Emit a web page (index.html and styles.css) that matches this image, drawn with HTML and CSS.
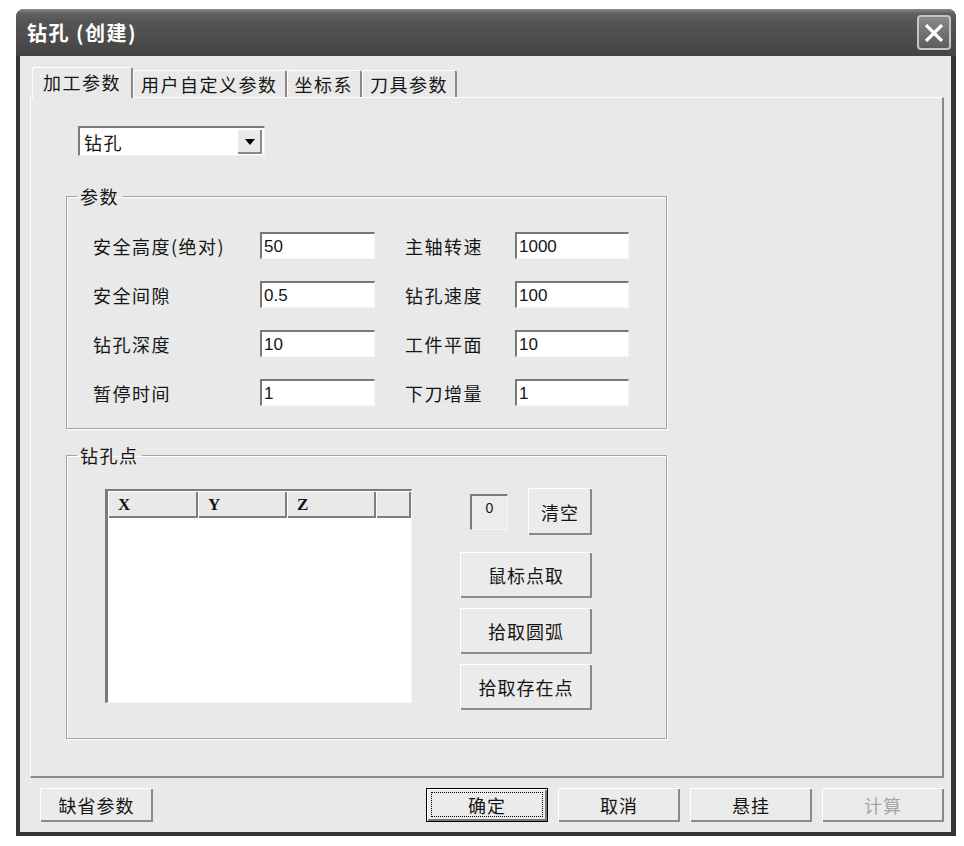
FILE: index.html
```html
<!DOCTYPE html>
<html lang="zh-CN">
<head>
<meta charset="utf-8">
<title>钻孔(创建)</title>
<link rel="stylesheet" href="styles.css">
</head>
<body>
<div class="window">
  <div class="titlebar">
    <span class="title">钻孔 (创建)</span>
    <span class="close">
      <svg width="20" height="18" viewBox="0 0 20 18"><path d="M2 1 L18 17 M18 1 L2 17" stroke="#fff" stroke-width="3.2" fill="none"/></svg>
    </span>
  </div>
  <div class="client">
    <div class="tabs">
      <div class="tab active">加工参数</div>
      <div class="tab">用户自定义参数</div>
      <div class="tab">坐标系</div>
      <div class="tab">刀具参数</div>
    </div>
    <div class="panel">
      <div class="combo">
        <span class="combo-text">钻孔</span>
        <span class="combo-btn"><svg width="10" height="6" viewBox="0 0 10 6"><path d="M0 0 H10 L5 6 Z" fill="#000"/></svg></span>
      </div>
      <fieldset class="group group-params">
        <legend>参数</legend>
        <div class="param-grid">
          <span class="lbl">安全高度(绝对)</span><input class="field" type="text" value="50" readonly>
          <span class="lbl lbl-right">主轴转速</span><input class="field" type="text" value="1000" readonly>
          <span class="lbl">安全间隙</span><input class="field" type="text" value="0.5" readonly>
          <span class="lbl lbl-right">钻孔速度</span><input class="field" type="text" value="100" readonly>
          <span class="lbl">钻孔深度</span><input class="field" type="text" value="10" readonly>
          <span class="lbl lbl-right">工件平面</span><input class="field" type="text" value="10" readonly>
          <span class="lbl">暂停时间</span><input class="field" type="text" value="1" readonly>
          <span class="lbl lbl-right">下刀增量</span><input class="field" type="text" value="1" readonly>
        </div>
      </fieldset>
      <fieldset class="group group-points">
        <legend>钻孔点</legend>
        <div class="points-body">
          <div class="listview">
            <div class="lv-header">
              <div class="lv-col col-x">X</div>
              <div class="lv-col col-y">Y</div>
              <div class="lv-col col-z">Z</div>
              <div class="lv-col col-rest"></div>
            </div>
            <div class="lv-body"></div>
          </div>
          <div class="point-actions">
            <div class="count-row">
              <div class="count">0</div>
              <button class="btn btn-clear">清空</button>
            </div>
            <button class="btn btn-wide">鼠标点取</button>
            <button class="btn btn-wide">拾取圆弧</button>
            <button class="btn btn-wide">拾取存在点</button>
          </div>
        </div>
      </fieldset>
    </div>
    <div class="footer">
      <button class="btn btn-foot btn-default-params">缺省参数</button>
      <div class="footer-right">
        <button class="btn btn-foot btn-ok"><span class="focus">确定</span></button>
        <button class="btn btn-foot">取消</button>
        <button class="btn btn-foot">悬挂</button>
        <button class="btn btn-foot btn-disabled">计算</button>
      </div>
    </div>
  </div>
</div>
</body>
</html>
```
FILE: styles.css
```css
* { box-sizing: border-box; }

body {
  margin: 0;
  background: #ffffff;
  font-family: "Noto Sans CJK SC", "Noto Sans", sans-serif;
  color: #151515;
}

.window {
  margin: 9px 0 0 16px;
  width: 940px;
  height: 827px;
  display: flex;
  flex-direction: column;
  background: #353535;
  border-radius: 8px 8px 0 0;
}

.titlebar {
  height: 47px;
  flex: none;
  display: flex;
  align-items: center;
  justify-content: space-between;
  padding: 0 5px 0 11px;
  border-radius: 8px 8px 0 0;
  background: linear-gradient(#8c8c8c 0, #626262 4px, #555555 12px, #4d4d4d 28px, #444444 100%);
}

.title {
  color: #ffffff;
  font-weight: 700;
  font-size: 20px;
  letter-spacing: 1.5px;
  line-height: 24px;
}

.close {
  width: 34px;
  height: 35px;
  border: 2px solid #c4c4c4;
  border-radius: 4px;
  background: linear-gradient(#8a8a8a, #5c5c5c);
  display: flex;
  align-items: center;
  justify-content: center;
}

.client {
  flex: 1;
  min-height: 0;
  margin: 0 5px 4px 4px;
  background: #e9e9e9;
  display: flex;
  flex-direction: column;
  padding: 11px 7px 10px 10px;
}

.tabs {
  display: flex;
  align-items: flex-end;
  height: 30px;
  flex: none;
  padding-left: 2px;
}

.tab {
  height: 27px;
  padding: 0 7px;
  font-size: 18px;
  letter-spacing: 1.5px;
  line-height: 26px;
  border-top: 1px solid #ffffff;
  border-left: 1px solid #ffffff;
  border-right: 2px solid #8a8a8a;
  border-radius: 3px 3px 0 0;
  background: #e9e9e9;
  white-space: nowrap;
}

.tab.active {
  height: 31px;
  padding: 0 10px;
  line-height: 29px;
  margin-bottom: -1px;
  position: relative;
  z-index: 1;
}

.panel {
  flex: 1;
  min-height: 0;
  border-top: 1px solid #ffffff;
  border-left: 1px solid #ffffff;
  border-right: 2px solid #8a8a8a;
  border-bottom: 2px solid #8a8a8a;
  padding: 28px 0 0 35px;
}

.combo {
  margin-left: 12px;
  width: 187px;
  height: 30px;
  display: flex;
  align-items: center;
  background: #ffffff;
  border-style: solid;
  border-width: 2px 1px 1px 2px;
  border-color: #7a7a7a #f4f4f4 #f4f4f4 #7a7a7a;
  padding: 1px 2px 1px 0;
}

.combo-text {
  flex: 1;
  padding-left: 4px;
  font-size: 18px;
  letter-spacing: 1.5px;
  line-height: 24px;
}

.combo-btn {
  width: 25px;
  height: 25px;
  display: flex;
  align-items: center;
  justify-content: center;
  background: #e9e9e9;
  box-shadow: inset 1px 1px 0 #ffffff, inset -2px -2px 0 #8a8a8a;
}

.group {
  margin: 29px 0 0 0;
  width: 601px;
  min-inline-size: 0;
  padding: 0;
  border: 1px solid #a2a2a2;
  box-shadow: 1px 1px 0 #ffffff, inset 1px 1px 0 #ffffff;
}

.group-points {
  margin-top: 15px;
}

.group legend {
  margin-left: 10px;
  padding: 0 3px;
  font-size: 18px;
  letter-spacing: 1.5px;
  line-height: 22px;
}

.param-grid {
  display: grid;
  grid-template-columns: 167px 115px 140px 114px;
  grid-auto-rows: 27px;
  row-gap: 22px;
  align-items: center;
  padding: 25px 0 22px 26px;
}

.lbl {
  font-size: 18px;
  letter-spacing: 1.5px;
  line-height: 24px;
  white-space: nowrap;
}

.lbl-right {
  padding-left: 30px;
}

.field {
  width: 100%;
  height: 27px;
  margin: 0;
  background: #ffffff;
  border-style: solid;
  border-width: 2px 1px 1px 2px;
  border-color: #787878 #f6f6f6 #f6f6f6 #787878;
  padding: 2px 0 0 2px;
  font-family: "Liberation Sans", Arial, sans-serif;
  font-size: 17px;
  color: #151515;
  outline: none;
}

.points-body {
  display: flex;
  align-items: flex-start;
  padding: 23px 0 28px 38px;
}

.listview {
  width: 307px;
  height: 214px;
  display: flex;
  flex-direction: column;
  background: #ffffff;
  border-style: solid;
  border-width: 2px 1px 1px 3px;
  border-color: #7a7a7a #f6f6f6 #f6f6f6 #7a7a7a;
}

.lv-header {
  display: flex;
  height: 27px;
  flex: none;
}

.lv-col {
  height: 27px;
  background: #e9e9e9;
  box-shadow: inset 1px 1px 0 #ffffff, inset -2px -2px 0 #7e7e7e;
  font-family: "Liberation Serif", "Times New Roman", serif;
  font-weight: 700;
  font-size: 17px;
  line-height: 27px;
  padding-left: 10px;
  color: #111;
}

.col-x { width: 90px; }
.col-y { width: 89px; }
.col-z { width: 89px; }
.col-rest { flex: 1; }

.lv-body { flex: 1; }

.point-actions {
  margin-left: 48px;
  width: 132px;
  display: flex;
  flex-direction: column;
  gap: 10px;
  margin-top: -1px;
}

.count-row {
  display: flex;
  justify-content: flex-end;
  align-items: center;
  gap: 20px;
  margin-bottom: 7px;
}

.count {
  width: 38px;
  height: 36px;
  background: #ececec;
  border-style: solid;
  border-width: 2px 1px 1px 2px;
  border-color: #7a7a7a #f6f6f6 #f6f6f6 #7a7a7a;
  text-align: center;
  font-family: "Liberation Sans", Arial, sans-serif;
  font-size: 14px;
  line-height: 20px;
  padding-top: 2px;
}

.btn {
  margin: 0;
  padding: 0;
  border: none;
  background: #ebebeb;
  box-shadow: inset 1px 1px 0 #ffffff, inset -2px -2px 0 #8a8a8a;
  font-family: "Noto Sans CJK SC", "Noto Sans", sans-serif;
  font-size: 18px;
  letter-spacing: 1px;
  color: #151515;
  display: flex;
  align-items: center;
  justify-content: center;
}

.btn-clear {
  width: 64px;
  height: 47px;
}

.btn-wide {
  width: 132px;
  height: 46px;
}

.footer {
  flex: none;
  margin-top: 10px;
  height: 34px;
  display: flex;
  align-items: stretch;
}

.footer-right {
  margin-left: auto;
  display: flex;
  gap: 10px;
}

.btn-foot {
  width: 122px;
  height: 34px;
}

.btn-default-params {
  width: 113px;
  margin-left: 10px;
}

.btn-ok {
  border: 1px solid #000000;
  padding: 3px 4px 4px 4px;
  box-shadow: inset 1px 1px 0 #ffffff, inset -2px -2px 0 #7a7a7a;
}

.focus {
  flex: 1;
  align-self: stretch;
  display: flex;
  align-items: center;
  justify-content: center;
  border: 1px dotted #000000;
}

.btn-disabled {
  color: #a6a6a6;
}
```
